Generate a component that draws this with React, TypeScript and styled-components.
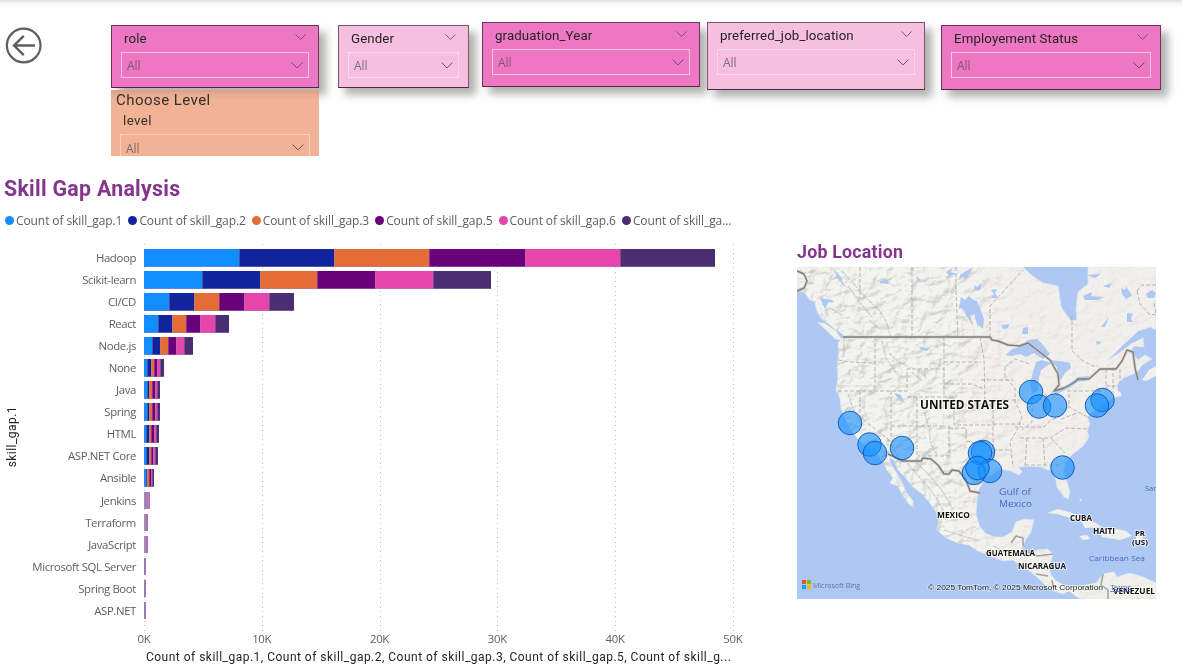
import React from 'react';
import styled, { createGlobalStyle } from 'styled-components';

const DIN = "Roboto, 'Liberation Sans', sans-serif";
const SEGOE = "'Open Sans', 'Noto Sans', sans-serif";

const GlobalStyle = createGlobalStyle`
  * { box-sizing: border-box; }
  body { margin: 0; background: #fff; }
`;

const Page = styled.main`
  width: 1182px;
  height: 664px;
  overflow: hidden;
  display: flex;
  flex-direction: column;
  background: linear-gradient(#dedede 0, #f3f3f3 3px, #fff 7px);
  font-family: ${SEGOE};
  color: #605e5c;
`;

const Header = styled.header`
  display: flex;
  flex: none;
  align-items: flex-start;
  height: 176px;
  padding-top: 22px;
`;

const BackButton = styled.button`
  width: 38px;
  height: 38px;
  margin: 4px 68px 0 5px;
  padding: 0;
  border: 0;
  background: none;
  svg { display: block; }
`;

const SlicerStack = styled.div`
  display: flex;
  flex-direction: column;
  width: 208px;
  margin: 3px 19px 0 0;
`;

const Slicer = styled.section<{ $w: number; $h: number; $top?: number; $gap?: number; $light?: boolean }>`
  flex: none;
  width: ${p => p.$w}px;
  height: ${p => p.$h}px;
  margin: ${p => p.$top ?? 0}px ${p => p.$gap ?? 0}px 0 0;
  padding: 5px 9px 0;
  border: 1px solid ${p => (p.$light ? '#79566f' : '#6f3561')};
  border-bottom-color: #4d2745;
  background: ${p => (p.$light ? '#f6bfe0' : '#ee77c3')};
  box-shadow: 7px 7px 8px rgba(70, 70, 65, 0.42);
`;

const SlicerHead = styled.div`
  display: flex;
  justify-content: space-between;
  height: 21px;
  padding: 0 3px;
  svg { margin-top: 3px; }
`;

const SlicerTitle = styled.span`
  font: 400 13.3px/15px ${DIN};
  letter-spacing: 0.1px;
  color: #252423;
  white-space: nowrap;
`;

const Dropdown = styled.div<{ $peach?: boolean }>`
  display: flex;
  justify-content: space-between;
  height: 26px;
  padding: 0 5px;
  border: 1px solid ${p => (p.$peach ? '#f8d2bd' : 'rgba(255,225,243,.75)')};
  font: 400 12px/26px ${SEGOE};
  color: rgba(75, 72, 80, 0.7);
  svg { margin-top: 9px; }
`;

const LevelPanel = styled.section`
  height: 66px;
  margin-top: 2px;
  padding: 0 9px;
  overflow: hidden;
  background: linear-gradient(#dda084 0, #eaad91 6px, #f1b296 10px);
  ${Dropdown} { margin-top: 5px; line-height: 28px; }
`;

const PanelTitle = styled.h3`
  margin: 0 -4px;
  font: 400 15px/20px ${DIN};
  letter-spacing: 0.45px;
  color: #33302e;
`;

const LevelName = styled.div`
  padding: 2px 0 0 3px;
  font: 400 13.3px/17px ${DIN};
  letter-spacing: 0.4px;
  color: #33302e;
`;

const Body = styled.div`
  display: flex;
`;

const ChartPanel = styled.section`
  width: 797px;
`;

const ChartTitle = styled.h1`
  margin: 0 0 0 4px;
  font: 700 21.3px/26px ${DIN};
  letter-spacing: 0.3px;
  color: #85358d;
`;

const Legend = styled.div`
  display: flex;
  gap: 6px;
  height: 36px;
  padding: 10px 0 0 5px;
`;

const LegendItem = styled.span<{ $c: string }>`
  display: flex;
  align-items: center;
  gap: 2px;
  height: 16px;
  font-size: 12px;
  letter-spacing: -0.09px;
  white-space: nowrap;
  &::before {
    content: '';
    width: 9px;
    height: 9px;
    border-radius: 50%;
    background: ${p => p.$c};
  }
`;

const Plot = styled.div`
  display: grid;
  grid-template-columns: 24px 112px 8px 590px;
  grid-template-rows: 387px;
  padding-top: 6px;
`;

const YAxisTitle = styled.div`
  writing-mode: vertical-rl;
  transform: rotate(180deg);
  justify-self: center;
  align-self: center;
  margin-top: -1px;
  font: 400 12px/16px ${DIN};
  letter-spacing: 0.45px;
  color: #252423;
`;

const Categories = styled.div`
  padding-top: 3px;
`;

const Category = styled.div`
  height: 22.06px;
  font-size: 11.4px;
  line-height: 22px;
  letter-spacing: -0.38px;
  text-align: right;
  white-space: nowrap;
`;

const Bars = styled.div`
  grid-column: 4;
  padding-top: 5px;
  background:
    repeating-linear-gradient(to bottom, transparent 0 1px, #fff 1px 4.65px),
    repeating-linear-gradient(to right, #c2c2c2 0 1px, transparent 1px 117.8px);
`;

const BarRow = styled.div`
  display: flex;
  align-items: flex-start;
  height: 22.06px;
`;

const Segment = styled.div<{ $c: string; $first: boolean; $thin: boolean }>`
  height: 17.5px;
  background: ${p => (p.$thin ? `color-mix(in srgb, ${p.$c} 22%, #b88fbd)` : p.$c)};
  box-shadow: inset ${p => (p.$first || p.$thin ? 0 : 0.7)}px -0.8px 0 rgba(165, 130, 175, 0.65);
`;

const Ticks = styled.div`
  display: flex;
  margin-left: 114px;
  height: 16px;
`;

const Tick = styled.span`
  flex: none;
  width: 117.8px;
  text-align: center;
  font-size: 11.4px;
  line-height: 16px;
  letter-spacing: -0.3px;
  transform: translateX(-29px);
`;

const XAxisTitle = styled.div`
  margin: 2px 0 0 146px;
  font: 400 12px/16px ${DIN};
  letter-spacing: 0.485px;
  color: #252423;
  white-space: nowrap;
`;

const MapPanel = styled.section`
  width: 359px;
  padding-top: 56px;
`;

const MapTitle = styled.h2`
  margin: 9px 0 0;
  height: 17px;
  font: 700 17.8px/22px ${DIN};
  letter-spacing: 0.22px;
  color: #85358d;
`;

const MapSvg = styled.svg`
  display: block;
  margin-top: 9px;
  font-family: ${SEGOE};
`;

const Chevron = ({ w = 12 }: { w?: number }) => (
  <svg width={w} height={w * 0.58} viewBox="0 0 12 7" fill="none" stroke="#6d4f68" strokeWidth="1">
    <path d="M.5.5 6 6 11.5.5" />
  </svg>
);

const Filter = ({ title, ...box }: {
  title: string; $w: number; $h: number; $top?: number; $gap?: number; $light?: boolean;
}) => (
  <Slicer {...box}>
    <SlicerHead>
      <SlicerTitle>{title}</SlicerTitle>
      <Chevron w={11} />
    </SlicerHead>
    <Dropdown>All<Chevron /></Dropdown>
  </Slicer>
);

const COLORS = ['#118dff', '#12239e', '#e66c37', '#6b007b', '#e645ab', '#4b2d73'];
const LEGEND = ['Count of skill_gap.1', 'Count of skill_gap.2', 'Count of skill_gap.3', 'Count of skill_gap.5', 'Count of skill_gap.6', 'Count of skill_ga...'];
const ROWS: [string, number][] = [
  ['Hadoop', 48470], ['Scikit-learn', 29450], ['CI/CD', 12700], ['React', 7190], ['Node.js', 4130],
  ['None', 1670], ['Java', 1370], ['Spring', 1350], ['HTML', 1270], ['ASP.NET Core', 1160],
  ['Ansible', 850], ['Jenkins', 480], ['Terraform', 330], ['JavaScript', 320],
  ['Microsoft SQL Server', 140], ['Spring Boot', 130], ['ASP.NET', 130],
];
const PX_PER_UNIT = 589 / 50000;

const PINS = [
  [850, 423], [869.5, 444.5], [875, 453], [902, 448], [1031, 392], [1039, 406.5], [1055, 405.5],
  [1102.5, 400], [1097, 405.5], [1062.5, 467.5], [983, 452], [980, 453], [990, 471], [974, 473], [977.5, 468],
];

const LAND = `M797 267 L797 290 805 293 810 300 815 302 817 311 821 318 829 324 836 330 843 334 843 338 838 343 839 352 837 368 838 379 836 390 840 398 841 408 846 419 852 432 860 441 868 447 878 454 884 463 887 470 893 478 890 483 898 486 902 494 908 503 914 509 913 501 906 492 902 482 897 474 891 464 889 458 894 460 898 470 905 477 912 486 922 494 930 503 936 512 939 522 937 530 946 538 958 543 969 545 976 550 990 556 1003 561 1013 560 1022 566 1031 572 1037 577 1042 582 1047 587 1054 591 1063 594 1069 591 1077 597 1082 599 1156 599 1156 583 1143 577 1130 573 1117 577 1114 572 1103 574 1096 583 1086 585 1076 586 1063 585 1055 580 1050 573 1050 564 1053 554 1048 549 1037 550 1029 554 1021 550 1025 541 1031 532 1034 520 1025 519 1016 522 1012 532 1003 537 994 537 985 533 979 525 976 514 977 500 979 489 985 478 992 474 1001 469 1011 471 1019 475 1022 472 1018 467 1031 466 1041 467 1048 470 1053 470 1056 480 1057 487 1064 497 1068 499 1070 492 1067 482 1063 472 1066 461 1073 454 1083 446 1089 437 1087 431 1090 424 1087 417 1094 411 1105 404 1112 398 1121 396 1121 393 1118 391 1117 385 1123 378 1133 374 1138 371 1142 365 1152 359 1145 355 1138 360 1131 351 1134 346 1144 347 1143 338 1131 344 1118 354 1108 360 1122 346 1138 331 1150 327 1156 330 1156 267 1088 267 1088 284 1078 292 1076 309 1077 320 1071 321 1061 307 1058 286 1043 283 1031 275 1023 267 Z`;

const WATER = [
  'M1006 355 1012 349 1020 347 1028 340 1037 339 1044 346 1050 354 1043 359 1034 353 1026 357 1020 354 1011 356Z',
  'M1036 362 1042 360 1051 363 1047 366 1041 370 1038 382 1038 391 1032 394 1030 384 1033 372Z',
  'M1049 360 1060 361 1070 363 1071 368 1065 373 1060 381 1057 374 1057 367Z',
  'M1053 391 1066 386 1078 377 1090 376 1086 381 1077 382 1071 387 1057 394Z',
  'M961 297 965 300 969 296 975 301 978 305 981 317 978 327 974 314 970 316 974 327 966 315 962 308 959 309Z',
  'M970 299 977 301 980 308 984 319 983 329 978 324 974 310Z',
  'M946 272 949 270 953 268 951 272 957 274 949 276Z', 'M960 275 968 270 973 267 969 275 966 279 963 277 959 280Z',
  'M974 285 977 287 981 283 981 289 977 291 974 289Z', 'M991 290 997 289 995 293 998 298 991 298 994 294Z',
  'M1001 325 1009 324 1008 328 1003 329Z', 'M1023 328 1028 327 1028 334 1022 334Z',
  'M1083 296 1092 292 1091 296 1104 297 1098 300 1085 300Z', 'M1103 286 1112 283 1109 288Z',
  'M1121 288 1125 290 1126 286 1128 290 1132 295 1126 299 1122 294Z', 'M1127 313 1133 314 1131 318 1133 322 1127 322Z',
  'M1101 327 1109 317 1105 327Z', 'M1146 294 1152 290 1156 293 1154 298 1148 298Z',
  'M1096 341 1102 342 1097 345Z', 'M834 269 841 277 844 286 837 277Z',
  'M880 281 888 280 889 284 880 283Z', 'M916 276 921 280 918 282Z',
  'M919 347 928 348 932 345 927 351 921 350Z', 'M894 393 901 395 904 402 899 400Z',
  'M820 298 832 300 834 302 825 303 829 301 825 309Z', 'M1087 275 1101 274 1095 278Z',
];

const STATES = `M860 267V299 M912 267V337 M956 267V290L958 337 M990 337V306L1023 270 M1072 315V351L1083 361 1093 366H1098
M875 337V391 M838 360 850 362 875 363 M838 391H907V369H944 M944 337V397 M944 362H981 M944 384H972L984 389 M860 391V417L888 439V446
M891 391V439 M891 426H944 M917 397V461 M907 397H954V425H995 M888 439 898 457 M949 425V456H918 M949 428H966V441L980 444 995 445
M980 337 984 358 985 400H1019 M981 380H1013 M985 400 993 408V463 M993 424H1024 M1005 367V377L1015 388V402L1022 416 1017 430 1010 442 1013 467
M1032 396V422L1022 430 M1046 394V417 M1067 391H1101 M1069 394V406L1059 417 1051 420 1044 427H1015 M1020 438H1050L1066 428 1089 429
M1027 438 1025 467 M1043 438 1045 465 M1025 465H1061 M1051 438 1065 453 M993 450H1011 M1068 406 1076 411 1088 417 M1061 419 1077 413
M1106 369V393 M1113 367V394 M1106 386H1119 M1120 369V383 M1005 367 1015 359 1030 364 M1137 291 1142 285 1156 285 M1137 291 1140 304 1149 314 1156 315 1154 302`;

const RIDGES = `M842 271 853 283 864 296 880 311 887 323 891 339 M848 286 861 304 872 317 M835 276 847 288 M832 309 843 316 M869 320 880 329 M882 341 886 358 897 374 904 378 M889 353 899 362 909 367 M880 382 893 378 M844 343V357 M848 394 853 409 862 425 M912 372 922 381 M917 369 927 378 M925 413 929 428 931 444 937 455 M907 463 921 479 933 493 944 512 M914 460 930 476 943 492 952 508 M944 530 963 536 980 541 M993 546 1008 553 1023 557`;

const BORDERS = 'M843 337H990L992 340 998 341 1008 345 1019 346 1028 343 1041 353 1050 360 1058 374 1059 385 1054 391 1064 388 1075 382 1078 379 1089 379 1100 369H1116L1122 361 1127 350 1133 352 1135 368 1138 380 M888 454 903 461H921L923 458 931 459 938 465 944 474 949 474 952 470 959 471 966 480 970 491 980 493 M797 271 804 274 807 281 804 288 797 291';

const SMALL_BORDERS = 'M1011 543 1016 536 1023 538V546 M1021 550 1031 553 1037 556 1053 554 M1036 574 1048 576 M1052 580 1053 586 M1103 574 1101 585 1108 590 1108 599';

const ISLANDS = ['M1047 513 1058 509 1069 512 1082 517 1094 522 1102 527 1085 528 1081 521 1067 517 1057 514Z', 'M1100 532 1112 528 1126 531 1132 536 1120 540 1102 537Z', 'M1079 536 1087 535 1090 539 1083 540Z', 'M1136 536H1143V540H1136Z', 'M1079 498 1082 500 1081 502Z', 'M817 322 824 323 836 331 843 341 835 339 827 331Z', 'M1142 380 1149 370 1156 366 1156 376 1146 381Z'];

const Map = () => (
  <MapSvg width="359" height="332" viewBox="797 267 359 332">
    <defs>
      <clipPath id="land"><path d={LAND} /></clipPath>
      <linearGradient id="west"><stop offset="0" stopColor="#fff" /><stop offset=".42" stopColor="#fff" /><stop offset=".6" stopColor="#444" /><stop offset="1" stopColor="#333" /></linearGradient>
      <mask id="relief"><rect x="797" y="267" width="359" height="332" fill="url(#west)" /></mask>
      <filter id="terrain" x="0" y="0" width="1" height="1" colorInterpolationFilters="sRGB">
        <feTurbulence type="fractalNoise" baseFrequency=".08 .11" numOctaves="3" seed="7" />
        <feDiffuseLighting surfaceScale="5" diffuseConstant="1.15" lightingColor="#fff"><feDistantLight azimuth="225" elevation="60" /></feDiffuseLighting>
      </filter>
    </defs>
    <rect x="797" y="267" width="359" height="332" fill="#adc8f3" />
    <path d={LAND} fill="#f1f0ec" stroke="#dfe6ee" strokeWidth=".8" />
    <g clipPath="url(#land)">
      <g mask="url(#relief)" style={{ mixBlendMode: 'multiply' }}><rect x="797" y="267" width="359" height="332" filter="url(#terrain)" opacity=".2" /></g>
      <path d={RIDGES} fill="none" stroke="#bdbbb6" strokeWidth="1.3" strokeDasharray="4 1 2 1" opacity=".7" />
    </g>
    {ISLANDS.map(d => <path key={d} d={d} fill="#f1f0ec" />)}
    {WATER.map(d => <path key={d} d={d} fill="#adc8f3" />)}
    <path d={STATES} fill="none" stroke="#b0afac" strokeWidth=".9" strokeDasharray="4 2" />
    <path d={BORDERS} fill="none" stroke="#c5c4c1" strokeWidth="3" opacity=".6" />
    <path d={BORDERS} fill="none" stroke="#807f7d" strokeWidth="1.4" strokeLinejoin="round" />
    <path d={SMALL_BORDERS} fill="none" stroke="#a3a29f" strokeWidth="1.5" strokeLinejoin="round" />
    {PINS.map(([x, y]) => <circle key={`${x}-${y}`} cx={x} cy={y} r="11.8" fill="#118dff" fillOpacity=".6" stroke="#0b55bd" strokeWidth=".9" />)}
    <g fill="#111" fontWeight="700" stroke="#fff" strokeWidth="2" strokeOpacity=".65" paintOrder="stroke">
      <text x="920" y="409" fontSize="11.5" textLength="89" lengthAdjust="spacingAndGlyphs">UNITED STATES</text>
      <text x="937" y="518" fontSize="9" textLength="33" lengthAdjust="spacingAndGlyphs">MEXICO</text>
      <text x="986" y="556" fontSize="8" textLength="49" lengthAdjust="spacingAndGlyphs">GUATEMALA</text>
      <text x="1018" y="569" fontSize="8" textLength="48" lengthAdjust="spacingAndGlyphs">NICARAGUA</text>
      <text x="1070" y="521" fontSize="8" textLength="22" lengthAdjust="spacingAndGlyphs">CUBA</text>
      <text x="1093" y="534" fontSize="8" textLength="22" lengthAdjust="spacingAndGlyphs">HAITI</text>
      <text x="1135" y="536" fontSize="7.6" textLength="10" lengthAdjust="spacingAndGlyphs">PR</text>
      <text x="1132" y="544.5" fontSize="7.6" textLength="16" lengthAdjust="spacingAndGlyphs">(US)</text>
      <text x="1113" y="594" fontSize="8" textLength="42" lengthAdjust="spacingAndGlyphs">VENEZUEL</text>
    </g>
    <g fill="#4c6bb8">
      <text x="999" y="495" fontSize="9.5" textLength="32" lengthAdjust="spacingAndGlyphs">Gulf of</text>
      <text x="999" y="507" fontSize="9.5" textLength="33" lengthAdjust="spacingAndGlyphs">Mexico</text>
      <text x="1089" y="561" fontSize="7.5" textLength="56" lengthAdjust="spacingAndGlyphs">Caribbean Sea</text>
      <text x="1145" y="491" fontSize="7.5">Sar</text>
    </g>
    <path d="M802 580h4v4h-4z" fill="#f25022" /><path d="M807 580h4v4h-4z" fill="#7fba00" />
    <path d="M802 585h4v4h-4z" fill="#00a4ef" /><path d="M807 585h4v4h-4z" fill="#ffb900" />
    <text x="813" y="588" fontSize="8" fill="#66748c" textLength="47" lengthAdjust="spacingAndGlyphs">Microsoft Bing</text>
    <g fontFamily="'Liberation Sans', sans-serif" fontSize="7.6">
      <text x="928" y="590" fill="#222" stroke="#fff" strokeWidth="1.5" strokeOpacity=".45" paintOrder="stroke" textLength="175" lengthAdjust="spacingAndGlyphs">© 2025 TomTom, © 2025 Microsoft Corporation</text>
      <text x="1110" y="590" fill="#5270ba" textDecoration="underline" textLength="21" lengthAdjust="spacingAndGlyphs">Terms</text>
    </g>
  </MapSvg>
);

export default function App() {
  return (
    <Page>
      <GlobalStyle />
      <Header>
        <BackButton aria-label="Back">
          <svg width="38" height="38" viewBox="0 0 38 38" fill="none" stroke="#605e5c" strokeWidth="2.2">
            <circle cx="18.7" cy="19.5" r="16.8" />
            <path d="M30 19.5H9M18.8 9.8 9 19.5l9.8 9.7" strokeWidth="2.4" />
          </svg>
        </BackButton>
        <SlicerStack>
          <Filter title="role" $w={208} $h={63} />
          <LevelPanel>
            <PanelTitle>Choose Level</PanelTitle>
            <LevelName>level</LevelName>
            <Dropdown $peach>All<Chevron /></Dropdown>
          </LevelPanel>
        </SlicerStack>
        <Filter title="Gender" $w={131} $h={63} $top={3} $gap={13} $light />
        <Filter title="graduation_Year" $w={218} $h={65} $gap={7} />
        <Filter title="preferred_job_location" $w={218} $h={68} $gap={16} $light />
        <Filter title="Employement Status" $w={220} $h={65} $top={3} />
      </Header>
      <Body>
        <ChartPanel>
          <ChartTitle>Skill Gap Analysis</ChartTitle>
          <Legend>
            {LEGEND.map((name, i) => <LegendItem key={name} $c={COLORS[i]}>{name}</LegendItem>)}
          </Legend>
          <Plot>
            <YAxisTitle>skill_gap.1</YAxisTitle>
            <Categories>
              {ROWS.map(([name]) => <Category key={name}>{name}</Category>)}
            </Categories>
            <Bars>
              {ROWS.map(([name, total]) => (
                <BarRow key={name}>
                  {COLORS.map((c, i) => (
                    <Segment key={c} $c={c} $first={i === 0} $thin={total < 600} style={{ width: (total * PX_PER_UNIT) / 6 }} />
                  ))}
                </BarRow>
              ))}
            </Bars>
          </Plot>
          <Ticks>
            {['0K', '10K', '20K', '30K', '40K', '50K'].map(t => <Tick key={t}>{t}</Tick>)}
          </Ticks>
          <XAxisTitle>Count of skill_gap.1, Count of skill_gap.2, Count of skill_gap.3, Count of skill_gap.5, Count of skill_g...</XAxisTitle>
        </ChartPanel>
        <MapPanel>
          <MapTitle>Job Location</MapTitle>
          <Map />
        </MapPanel>
      </Body>
    </Page>
  );
}
